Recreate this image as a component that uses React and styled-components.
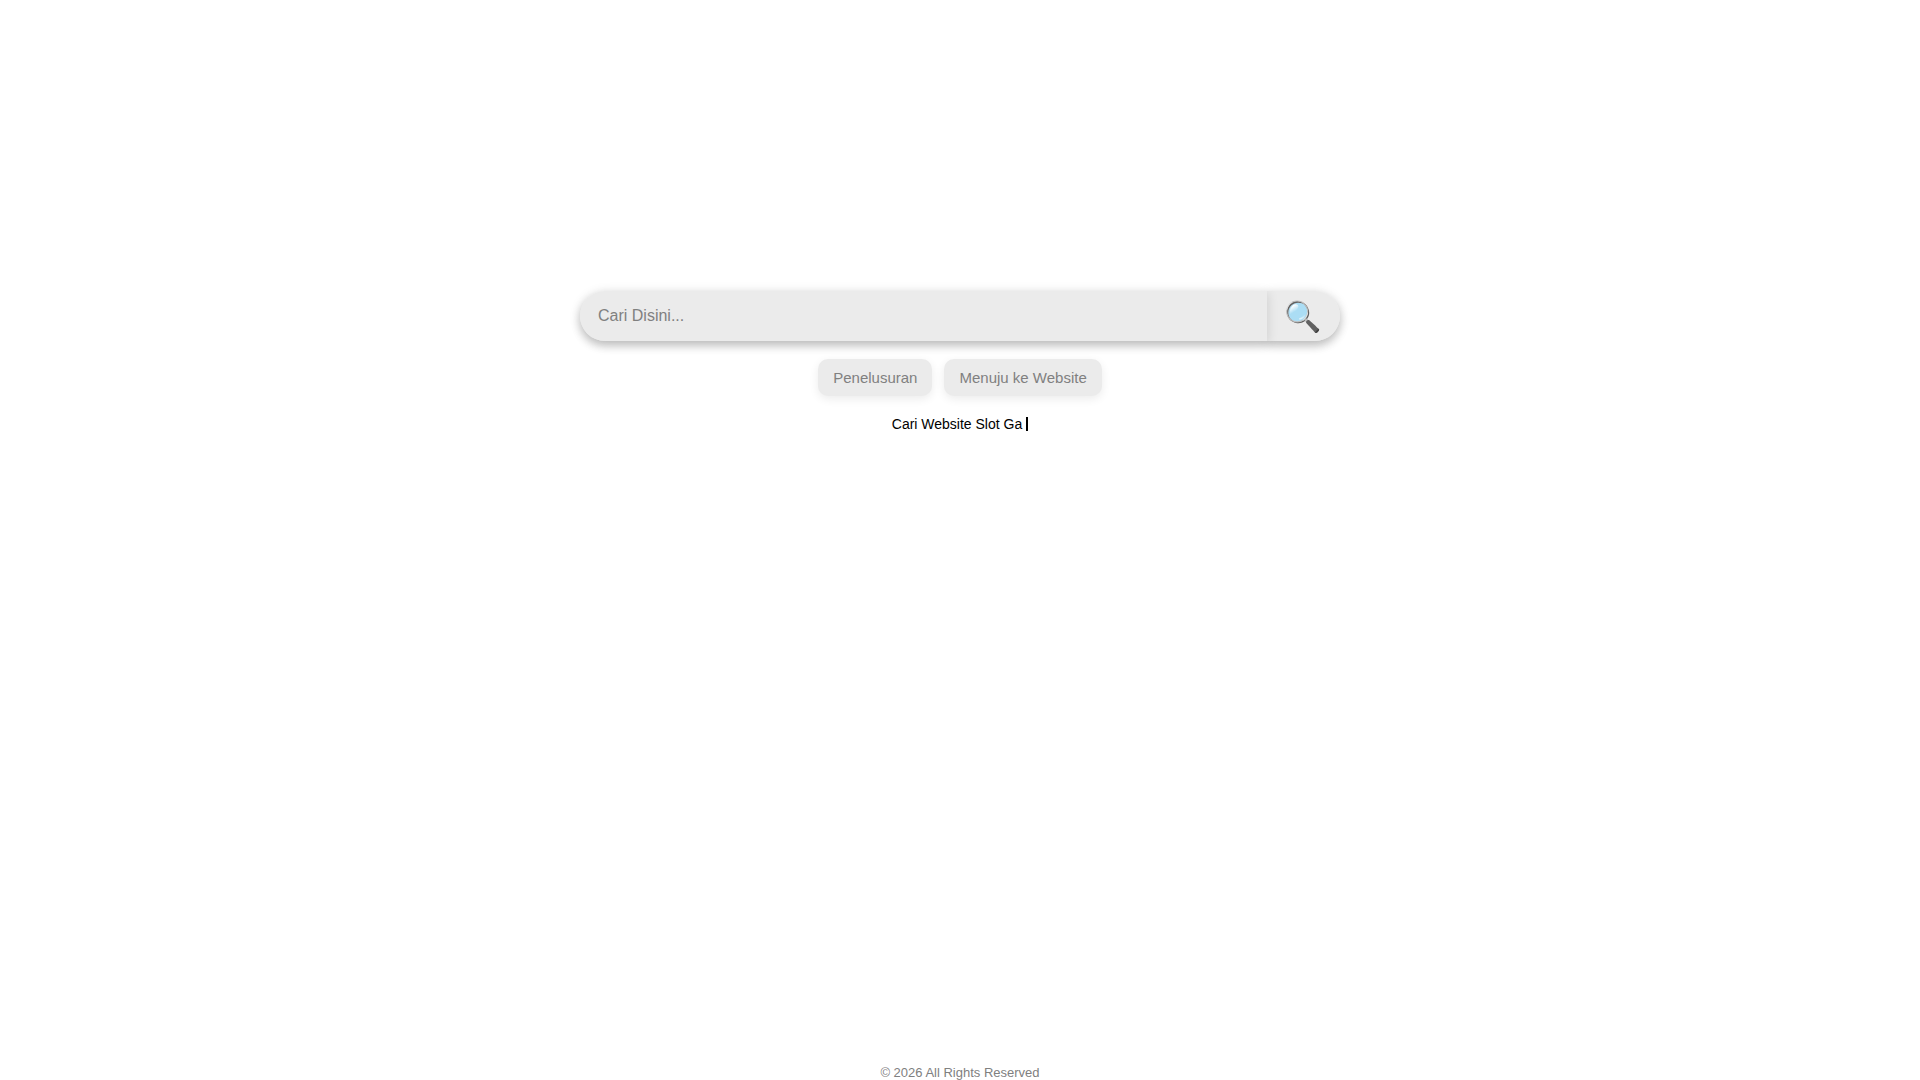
import React from "react";
import styled, { createGlobalStyle } from "styled-components";

const grey = "#808080";
const surface = "#ebebeb";
const fieldShadow = "0 2px 12px rgba(0, 0, 0, 0.14)";

const GlobalStyle = createGlobalStyle`
  * {
    box-sizing: border-box;
  }

  body {
    margin: 0;
    background: white;
    font-family: "Liberation Sans", Arial, sans-serif;
  }
`;

const Page = styled.div`
  min-height: 100vh;
  display: flex;
  flex-direction: column;
  align-items: center;
`;

const Main = styled.main`
  flex: 1;
  width: 100%;
  padding: 291px 16px 32px;
  display: flex;
  flex-direction: column;
  align-items: center;
`;

const SearchForm = styled.form`
  width: 100%;
  max-width: 760px;
  display: flex;
  flex-direction: column;
  align-items: center;
`;

const SearchRow = styled.div`
  width: 100%;
  height: 50px;
  display: flex;
  border-radius: 25px;
  box-shadow: 0 5px 10px rgba(0, 0, 0, 0.18);
`;

const SearchInput = styled.input`
  flex: 1;
  min-width: 0;
  padding: 0 18px;
  border: none;
  border-radius: 25px 0 0 25px;
  background: ${surface};
  box-shadow: ${fieldShadow};
  font-family: inherit;
  font-size: 16px;
  outline: none;
  z-index: 1;

  &::placeholder {
    color: ${grey};
  }
`;

const SearchButton = styled.button`
  padding: 0 18px;
  border: none;
  border-radius: 0 25px 25px 0;
  background: ${surface};
  box-shadow: ${fieldShadow};
  font-family: "Liberation Sans", "Noto Color Emoji", sans-serif;
  font-size: 30px;
  cursor: pointer;
`;

const Actions = styled.div`
  margin-top: 18px;
  display: flex;
  gap: 12px;
`;

const ActionButton = styled.button`
  padding: 10px 15px;
  border: none;
  border-radius: 10px;
  background: ${surface};
  box-shadow: 0 3px 10px rgba(0, 0, 0, 0.08);
  color: ${grey};
  font-family: inherit;
  font-size: 15px;
  cursor: pointer;
`;

const Typed = styled.p`
  margin: 20px 0 0;
  display: flex;
  align-items: center;
  gap: 4px;
  color: black;
  font-size: 14px;
  line-height: 16px;
`;

const Caret = styled.span`
  width: 2px;
  height: 14px;
  background: black;
`;

const Footer = styled.footer`
  color: ${grey};
  font-size: 13px;
  line-height: 15px;
`;

export default function App() {
  return (
    <Page>
      <GlobalStyle />
      <Main>
        <SearchForm onSubmit={e => e.preventDefault()}>
          <SearchRow>
            <SearchInput
              type="text"
              placeholder="Cari Disini..."
              aria-label="Cari Disini"
            />
            <SearchButton type="submit" aria-label="Cari">
              🔍
            </SearchButton>
          </SearchRow>
          <Actions>
            <ActionButton type="submit">Penelusuran</ActionButton>
            <ActionButton type="button">Menuju ke Website</ActionButton>
          </Actions>
        </SearchForm>
        <Typed>
          Cari Website Slot Ga
          <Caret />
        </Typed>
      </Main>
      <Footer>© 2026 All Rights Reserved</Footer>
    </Page>
  );
}
